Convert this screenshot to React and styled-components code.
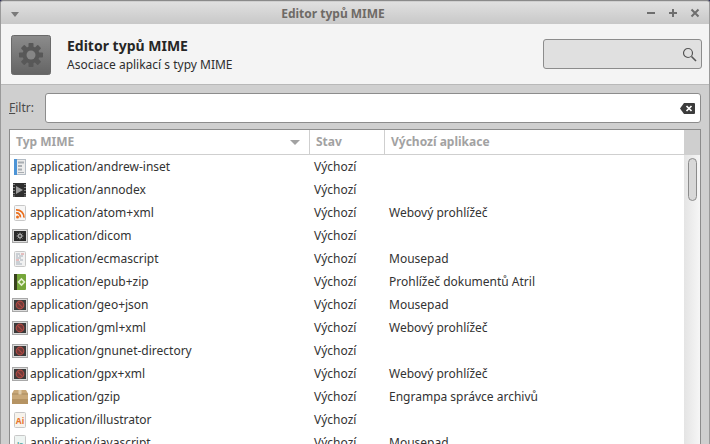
import React from "react";
import styled, { createGlobalStyle } from "styled-components";

const GlobalStyle = createGlobalStyle`
  html, body { margin: 0; padding: 0; height: 100%; overflow: hidden; background: #2a2a58; }
  body { font-family: "Noto Sans", sans-serif; font-size: 12px; color: #2e2e2e; }
`;

const rows = [
  ["application/andrew-inset", "", "doc"],
  ["application/annodex", "", "video"],
  ["application/atom+xml", "Webový prohlížeč", "rss"],
  ["application/dicom", "", "dicom"],
  ["application/ecmascript", "Mousepad", "script"],
  ["application/epub+zip", "Prohlížeč dokumentů Atril", "book"],
  ["application/geo+json", "Mousepad", "blocked"],
  ["application/gml+xml", "Webový prohlížeč", "blocked"],
  ["application/gnunet-directory", "", "blocked"],
  ["application/gpx+xml", "Webový prohlížeč", "blocked"],
  ["application/gzip", "Engrampa správce archivů", "box"],
  ["application/illustrator", "", "ai"],
  ["application/javascript", "Mousepad", "js"],
];

const Sheet = ({ children, fill = "#f6f6f6", stroke = "#c8c8c8" }) => (
  <svg width="16" height="16" viewBox="0 0 16 16">
    <rect x="2.5" y="0.5" width="11" height="15" rx="1" fill={fill} stroke={stroke} />
    {children}
  </svg>
);

const MimeIcon = ({ type }) => {
  if (type === "doc")
    return (
      <svg width="16" height="16" viewBox="0 0 16 16">
        <rect x="2.5" y="0.5" width="11" height="15" fill="#ececec" stroke="#b4bcc4" />
        <rect x="2" y="0" width="3" height="16" fill="#4d94d6" />
        <path d="M6 2.5h6v2H6zM6 6h4v2H6zM6 9.5h4v2H6zM6 13h6v1H6z" fill="#a8adb2" />
      </svg>
    );
  if (type === "video")
    return (
      <svg width="16" height="16" viewBox="0 0 16 16">
        <rect x="1" y="1" width="13" height="14" fill="#2f2f2f" />
        <path d="M1.5 2h1v1h-1zM1.5 5h1v1h-1zM1.5 8h1v1h-1zM1.5 11h1v1h-1zM1.5 13.5h1v1h-1zM12.5 2h1v1h-1zM12.5 5h1v1h-1zM12.5 8h1v1h-1zM12.5 11h1v1h-1zM12.5 13.5h1v1h-1z" fill="#d8d8d8" />
        <path d="M4 4l7 4-7 4z" fill="#9c9c9c" />
      </svg>
    );
  if (type === "dicom")
    return (
      <svg width="16" height="16" viewBox="0 0 16 16">
        <rect x="0.5" y="1.5" width="15" height="13" fill="#dcdcdc" stroke="#a8a8a8" />
        <rect x="2" y="3" width="12" height="10" fill="#2a2a2a" />
        <circle cx="8" cy="8" r="2.4" fill="#a0a0a0" />
        <path d="M8 4.6v6.8M4.6 8h6.8M5.6 5.6l4.8 4.8M10.4 5.6l-4.8 4.8" stroke="#a0a0a0" />
        <circle cx="8" cy="8" r="0.9" fill="#2a2a2a" />
      </svg>
    );
  if (type === "rss")
    return (
      <Sheet>
        <circle cx="5.5" cy="12" r="1.5" fill="#ea6f1e" />
        <path d="M4 8a4 4 0 0 1 4.4 4.4M4 4.8a7.5 7.5 0 0 1 8 7.8" fill="none" stroke="#ea6f1e" strokeWidth="1.7" />
      </Sheet>
    );
  if (type === "script")
    return (
      <Sheet fill="#f1f1f1">
        <path d="M4 3h4M4 5h2M7 5h4M4 7h5M8 9h3M4 11h4M4 13h6" stroke="#a5aeb8" strokeWidth="1" />
        <path d="M9 3h3M4 9h3" stroke="#d98a8a" strokeWidth="1" />
      </Sheet>
    );
  if (type === "book")
    return (
      <svg width="16" height="16" viewBox="0 0 16 16">
        <rect x="2" y="0" width="12" height="16" rx="1" fill="#76a63a" />
        <rect x="2" y="0" width="3" height="16" fill="#39421f" />
        <path d="M9.5 5l3 3-3 3-3-3z" fill="none" stroke="#e6f0d0" strokeWidth="1.6" />
      </svg>
    );
  if (type === "blocked")
    return (
      <svg width="16" height="16" viewBox="0 0 16 16">
        <rect x="0.5" y="1.5" width="15" height="13" fill="#dcdcdc" stroke="#a8a8a8" />
        <rect x="2" y="3" width="12" height="10" fill="#3a3a3a" />
        <circle cx="8" cy="8" r="3.8" fill="#6f3a38" stroke="#b04a44" strokeWidth="1.2" />
        <path d="M5.4 5.4l5.2 5.2" stroke="#b04a44" strokeWidth="1.2" />
      </svg>
    );
  if (type === "box")
    return (
      <svg width="16" height="16" viewBox="0 0 16 16">
        <path d="M0 4.5l2-3.5h12l2 3.5V15H0z" fill="#c9a878" />
        <path d="M0 5h16" stroke="#a88a5f" />
        <rect x="6.5" y="1" width="3" height="4.5" fill="#e0ccaa" />
        <rect x="0" y="10" width="16" height="5" fill="#b59363" />
      </svg>
    );
  if (type === "ai")
    return (
      <Sheet fill="#f7f3ec">
        <text x="8" y="11.5" textAnchor="middle" fontSize="8.5" fontWeight="700" fontFamily="Noto Sans" fill="#e8762c">Ai</text>
      </Sheet>
    );
  return (
    <Sheet fill="#eef4f2">
      <text x="8" y="12" textAnchor="middle" fontSize="7.5" fontWeight="700" fontFamily="Noto Sans" fill="#4aa89a">js</text>
    </Sheet>
  );
};

const GearIcon = () => (
  <svg width="40" height="40" viewBox="0 0 40 40">
    <defs>
      <linearGradient id="tile" x1="0" y1="0" x2="0" y2="1">
        <stop offset="0" stopColor="#8c8c8c" />
        <stop offset="1" stopColor="#646464" />
      </linearGradient>
    </defs>
    <rect x="0.5" y="0.5" width="39" height="39" rx="2" fill="url(#tile)" stroke="#6a6a6a" />
    <g fill="#585858">
      <circle cx="20" cy="20" r="8.5" />
      {[0, 45, 90, 135, 180, 225, 270, 315].map((a) => (
        <rect key={a} x="17.5" y="8" width="5" height="5" rx="0.8" transform={`rotate(${a} 20 20)`} />
      ))}
    </g>
    <circle cx="20" cy="20" r="4.5" fill="#868686" />
  </svg>
);

const App = () => (
  <Window>
    <GlobalStyle />
    <TitleBar>
      <MenuArrow />
      <Title>Editor typů MIME</Title>
      <WindowButtons>
        <svg width="10" height="10" viewBox="0 0 10 10"><path d="M1 5h8" stroke="#6e6e6e" strokeWidth="2" /></svg>
        <svg width="10" height="10" viewBox="0 0 10 10"><path d="M1 5h8M5 1v8" stroke="#6e6e6e" strokeWidth="2" /></svg>
        <svg width="10" height="10" viewBox="0 0 10 10"><path d="M1.5 1.5l7 7M8.5 1.5l-7 7" stroke="#6e6e6e" strokeWidth="2" /></svg>
      </WindowButtons>
    </TitleBar>

    <Banner>
      <GearIcon />
      <BannerText>
        <BannerTitle>Editor typů MIME</BannerTitle>
        <BannerSub>Asociace aplikací s typy MIME</BannerSub>
      </BannerText>
      <SearchBox>
        <svg width="15" height="15" viewBox="0 0 15 15">
          <circle cx="6" cy="6" r="4.5" fill="none" stroke="#555" strokeWidth="1.2" />
          <path d="M9.5 9.5l4.5 4.5" stroke="#555" strokeWidth="1.6" />
        </svg>
      </SearchBox>
    </Banner>

    <FilterRow>
      <FilterLabel><u>F</u>iltr:</FilterLabel>
      <FilterEntry>
        <svg width="15" height="11" viewBox="0 0 15 11">
          <path d="M4 0h10a1 1 0 0 1 1 1v9a1 1 0 0 1-1 1H4L0 5.5z" fill="#3c3c3c" />
          <path d="M6.5 3l5 5M11.5 3l-5 5" stroke="#fff" strokeWidth="1.7" />
        </svg>
      </FilterEntry>
    </FilterRow>

    <TableFrame>
      <TableMain>
        <HeaderRow>
          <HeaderCell $width={300}>
            Typ MIME
            <SortArrow />
          </HeaderCell>
          <HeaderCell $width={75}>Stav</HeaderCell>
          <HeaderCell $grow $last>Výchozí aplikace</HeaderCell>
        </HeaderRow>
        {rows.map(([name, app, icon]) => (
          <Row key={name}>
            <NameCell>
              <MimeIcon type={icon} />
              {name}
            </NameCell>
            <StateCell>Výchozí</StateCell>
            <AppCell>{app}</AppCell>
          </Row>
        ))}
      </TableMain>
      <ScrollColumn>
        <ScrollCorner />
        <ScrollTrack>
          <ScrollThumb />
        </ScrollTrack>
      </ScrollColumn>
    </TableFrame>
  </Window>
);

const Window = styled.div`
  height: 444px;
  overflow: hidden;
  box-sizing: border-box;
  padding-top: 1px;
  border-top: 1px solid #8a8a8a;
  border-left: 1px solid #9a9a9a;
  border-right: 1px solid #9a9a9a;
  border-radius: 3px 3px 0 0;
  background: #cfcfcf;
`;

const TitleBar = styled.div`
  height: 22px;
  display: flex;
  align-items: center;
  position: relative;
  justify-content: center;
  padding-right: 44px;
  background: linear-gradient(#e0e0e0, #c8c8c8);
`;

const MenuArrow = styled.span`
  position: absolute;
  left: 10px;
  top: 10px;
  border-left: 4px solid transparent;
  border-right: 4px solid transparent;
  border-top: 5px solid #7a7a7a;
`;

const Title = styled.span`
  font-weight: 700;
  font-size: 12px;
  color: #6e6a66;
`;

const WindowButtons = styled.div`
  position: absolute;
  right: 9px;
  top: 6px;
  display: flex;
  gap: 12px;
`;

const Banner = styled.div`
  height: 61px;
  box-sizing: border-box;
  padding: 11px 7px 0 10px;
  display: flex;
  align-items: flex-start;
  background: #f4f4f4;
  border-bottom: 1px solid #b8b8b8;
`;

const BannerText = styled.div`
  margin-left: 16px;
  flex: 1;
  display: flex;
  flex-direction: column;
`;

const BannerTitle = styled.div`
  font-size: 14px;
  font-weight: 700;
  line-height: 19px;
  margin-top: 1px;
  color: #262626;
`;

const BannerSub = styled.div`
  font-size: 12px;
  line-height: 17px;
  margin-top: 1px;
  color: #2e2e2e;
`;

const SearchBox = styled.div`
  width: 159px;
  height: 30px;
  margin-top: 4px;
  box-sizing: border-box;
  border: 1px solid #8c8c8c;
  border-radius: 3px;
  background: #e0e0e0;
  display: flex;
  align-items: center;
  justify-content: flex-end;
  padding-right: 4px;
`;

const FilterRow = styled.div`
  height: 44px;
  box-sizing: border-box;
  padding: 8px 8px 0 8px;
  display: flex;
  align-items: flex-start;
`;

const FilterLabel = styled.label`
  width: 36px;
  line-height: 29px;
  color: #4a4a4a;
`;

const FilterEntry = styled.div`
  flex: 1;
  height: 30px;
  box-sizing: border-box;
  border: 1px solid #8c8c8c;
  border-radius: 3px;
  background: #fff;
  display: flex;
  align-items: center;
  justify-content: flex-end;
  padding-right: 5px;
`;

const TableFrame = styled.div`
  margin: 0 8px;
  display: flex;
  border: 1px solid #8c8c8c;
  border-bottom: none;
  background: #fff;
`;

const TableMain = styled.div`
  flex: 1;
  min-width: 0;
`;

const HeaderRow = styled.div`
  height: 24px;
  display: flex;
  border-bottom: 1px solid #cfcfcf;
`;

const HeaderCell = styled.div`
  position: relative;
  box-sizing: border-box;
  ${(p) => (p.$grow ? "flex: 1;" : `width: ${p.$width}px;`)}
  padding-left: 6px;
  line-height: 24px;
  font-weight: 700;
  font-size: 12px;
  color: #a2a2a2;
  border-right: ${(p) => (p.$last ? "none" : "1px solid #cfcfcf")};
`;

const SortArrow = styled.span`
  position: absolute;
  right: 9px;
  top: 10px;
  border-left: 5px solid transparent;
  border-right: 5px solid transparent;
  border-top: 5px solid #a2a2a2;
`;

const Row = styled.div`
  height: 23px;
  display: flex;
  align-items: center;
  color: #333;
`;

const NameCell = styled.div`
  width: 300px;
  box-sizing: border-box;
  padding-left: 2px;
  display: flex;
  align-items: center;

  svg {
    margin-right: 2px;
    flex: none;
  }
`;

const StateCell = styled.div`
  width: 75px;
  box-sizing: border-box;
  padding-left: 4px;
`;

const AppCell = styled.div`
  flex: 1;
  padding-left: 4px;
`;

const ScrollColumn = styled.div`
  width: 16px;
  display: flex;
  flex-direction: column;
`;

const ScrollCorner = styled.div`
  height: 24px;
  background: #cfcfcf;
  border-bottom: 1px solid #cfcfcf;
`;

const ScrollTrack = styled.div`
  flex: 1;
  padding: 3px 3px 0 4px;
  background: linear-gradient(90deg, #e4e4e4, #f6f6f6);
`;

const ScrollThumb = styled.div`
  height: 43px;
  width: 9px;
  box-sizing: border-box;
  border: 1px solid #8c8c8c;
  border-radius: 5px;
  background: #d8d8d8;
`;

export default App;
